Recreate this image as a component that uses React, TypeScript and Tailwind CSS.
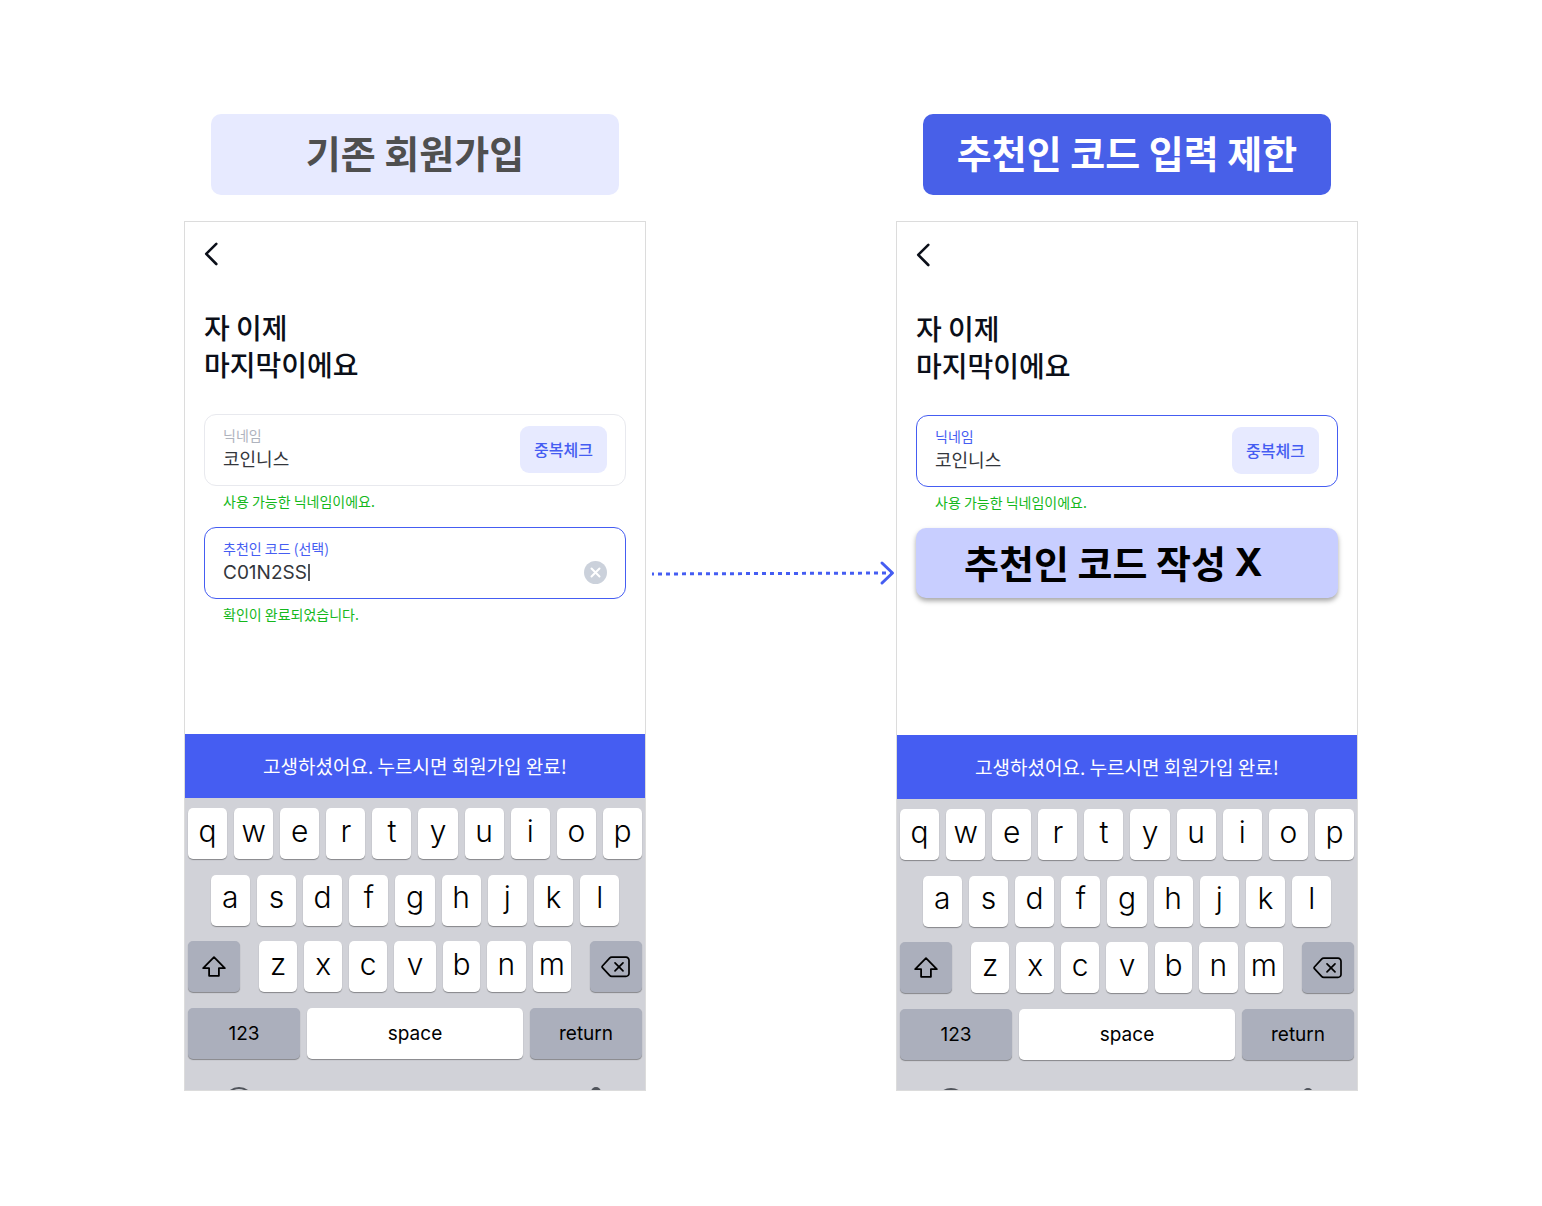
import React, { useId, useState } from 'react';

const KR = "font-['Noto_Sans_CJK_KR',sans-serif]";
const LATIN = "font-['Inter','Noto_Sans_CJK_KR',sans-serif]";

function BackIcon() {
  return (
    <svg width="16" height="24" viewBox="0 0 16 24" fill="none" stroke="#0b0f19" strokeWidth="2.6" strokeLinecap="round" strokeLinejoin="round">
      <path d="M12.300 1.800 2.200 11.800l10.100 10.200" />
    </svg>
  );
}

function ShiftIcon() {
  return (
    <svg width="26" height="22" viewBox="0 0 26 22" fill="none" stroke="#000" strokeWidth="1.8" strokeLinejoin="round">
      <path d="M13 1.200 2.200 12.200h5.900v7.600h9.800v-7.600h5.900z" />
    </svg>
  );
}

function DeleteIcon() {
  return (
    <svg width="30" height="22" viewBox="0 0 30 22" fill="none" stroke="#000" strokeWidth="1.7" strokeLinejoin="round" strokeLinecap="round">
      <path d="M10.800 1.200h14.200a3 3 0 0 1 3 3v13.200a3 3 0 0 1-3 3H10.800a3 3 0 0 1-2.200-1L1.400 11.600a1.200 1.200 0 0 1 0-1.600l7.200-7.800a3 3 0 0 1 2.200-1z" />
      <path d="m14 6.800 8 8m0-8-8 8" />
    </svg>
  );
}

function Key({ children, dark = false, small = false, label }: { children: React.ReactNode; dark?: boolean; small?: boolean; label?: string }) {
  const tone = dark ? 'bg-[#abafbc]' : 'bg-white';
  const size = small ? 'pt-[2px] text-[19px] leading-6 font-normal' : 'pb-[6px] text-[30px] leading-9 font-light';
  return (
    <button
      type="button"
      aria-label={label}
      className={`flex h-[51px] min-w-0 items-center justify-center rounded-[5px] text-black shadow-[0_1px_1px_#85868a] ${LATIN} ${tone} ${label ? '' : size}`}
    >
      {children}
    </button>
  );
}

function Keyboard({ stripClass }: { stripClass: string }) {
  return (
    <div className="bg-[#d1d2d8] px-[3px] pt-[10px]">
      <div className="flex h-[251px] flex-col justify-between">
        <div className="grid grid-cols-10 gap-[7px]">
          {[...'qwertyuiop'].map((k) => <Key key={k}>{k}</Key>)}
        </div>
        <div className="grid grid-cols-9 gap-[7px] px-[5%]">
          {[...'asdfghjkl'].map((k) => <Key key={k}>{k}</Key>)}
        </div>
        <div className="grid grid-cols-[52fr_312fr_52fr] gap-[19px]">
          <Key dark label="shift"><ShiftIcon /></Key>
          <div className="grid grid-cols-[38fr_37fr_38fr_41fr_37fr_38fr_38fr] gap-[7px]">
            {[...'zxcvbnm'].map((k) => <Key key={k}>{k}</Key>)}
          </div>
          <Key dark label="delete"><DeleteIcon /></Key>
        </div>
        <div className="grid grid-cols-[112fr_216fr_112fr] gap-[7px]">
          <Key dark small>123</Key>
          <Key small>space</Key>
          <Key dark small>return</Key>
        </div>
      </div>
      <div className={`flex items-start justify-between overflow-hidden pt-[28px] pr-[39px] pl-[36px] ${stripClass}`}>
        <svg width="30" height="30" viewBox="0 0 30 30" fill="none" stroke="#50545b" strokeWidth="2" className="shrink-0">
          <circle cx="15" cy="15" r="14" />
        </svg>
        <svg width="14" height="30" viewBox="0 0 14 30" fill="#50545b" className="shrink-0">
          <rect x="2" y="0" width="10" height="20" rx="5" />
        </svg>
      </div>
    </div>
  );
}

function Field({ label, initial, active = false, caret = false, latin = false, message, children }: {
  label: string;
  initial: string;
  active?: boolean;
  caret?: boolean;
  latin?: boolean;
  message: string;
  children: React.ReactNode;
}) {
  const id = useId();
  const [value, setValue] = useState(initial);
  return (
    <div>
      <div className={`flex h-[72px] items-center justify-between rounded-xl border px-[18px] ${active ? 'border-[#455df2]' : 'border-[#e8e9ee]'}`}>
        <div className="flex min-w-0 flex-col pb-1">
          <label htmlFor={id} className={`text-[14px] leading-5 ${active ? 'text-[#455df2]' : 'text-[#afb3be]'}`}>{label}</label>
          <div className="flex items-center gap-px">
            <input
              id={id}
              value={value}
              onChange={(e) => setValue(e.target.value)}
              className={`h-[26px] min-w-0 bg-transparent p-0 leading-[22px] text-[#33363b] outline-none [field-sizing:content] ${latin ? `pt-[2px] text-[19px] ${LATIN}` : `text-[18px] ${KR}`}`}
            />
            {caret && <span className="mt-[2px] h-[17px] w-[2px] bg-[#55585d]" />}
          </div>
        </div>
        {children}
      </div>
      <p className="px-[19px] pt-[5px] text-[14px] leading-5 text-[#14b81c]">{message}</p>
    </div>
  );
}

function CheckButton() {
  return (
    <button type="button" className="mb-[2px] h-[47px] shrink-0 rounded-[9px] bg-[#e7eaff] px-[14px] text-[16px] leading-6 font-medium text-[#455df2]">
      중복체크
    </button>
  );
}

function Phone({ children, className, stripClass }: { children: React.ReactNode; className: string; stripClass: string }) {
  return (
    <section className={`border border-[#dcdcdc] bg-white ${className}`}>
      <div className="h-[512px] px-[19px] pt-5">
        <button type="button" aria-label="뒤로" className="block">
          <BackIcon />
        </button>
        <h2 className="mt-[43px] text-[28px] leading-[37px] font-medium text-[#0b0f19]">
          자 이제<br />마지막이에요
        </h2>
        <div className="mt-[31px] flex flex-col gap-4">{children}</div>
      </div>
      <button type="button" className="block h-16 w-full bg-[#455df2] text-[19px] leading-7 text-white">
        고생하셨어요. 누르시면 회원가입 완료!
      </button>
      <Keyboard stripClass={stripClass} />
    </section>
  );
}

function Banner({ children, className }: { children: React.ReactNode; className: string }) {
  return (
    <h1 className={`mx-[27px] mb-[26px] flex h-[81px] items-center justify-center rounded-[10px] pb-[6px] text-[38px] leading-[54px] font-bold whitespace-nowrap ${className}`}>
      {children}
    </h1>
  );
}

export default function App() {
  return (
    <main className={`grid min-h-screen grid-cols-[462fr_250fr_462fr] items-start bg-white px-[184px] pt-[114px] pb-28 ${KR}`}>
      <div>
        <Banner className="bg-[#e7eaff] text-[#4f4f4f]">기존 회원가입</Banner>
        <Phone className="" stripClass="h-[31px]">
          <Field label="닉네임" initial="코인니스" message="사용 가능한 닉네임이에요.">
            <CheckButton />
          </Field>
          <Field label="추천인 코드 (선택)" initial="C01N2SS" message="확인이 완료되었습니다." active caret latin>
            <button type="button" aria-label="지우기" className="mt-[18px] shrink-0">
              <svg width="23" height="23" viewBox="0 0 23 23">
                <circle cx="11.5" cy="11.5" r="11.5" fill="#cbd1db" />
                <path d="m7.5 7.5 8 8m0-8-8 8" stroke="#fff" strokeWidth="2" strokeLinecap="round" />
              </svg>
            </button>
          </Field>
        </Phone>
      </div>

      <svg viewBox="0 0 250 30" fill="none" stroke="#455df2" strokeWidth="3" className="mt-[444px] w-full">
        <path d="M6 16 246 15" strokeDasharray="4 4" strokeDashoffset="2" />
        <path d="m236 5 10.500 10-10.500 10" strokeLinecap="round" strokeLinejoin="round" />
      </svg>

      <div>
        <Banner className="bg-[#4860e8] text-white">추천인 코드 입력 제한</Banner>
        <Phone className="pt-px" stripClass="h-[30px]">
          <Field label="닉네임" initial="코인니스" message="사용 가능한 닉네임이에요." active>
            <CheckButton />
          </Field>
          <p className="flex h-[70px] items-center rounded-[10px] bg-[#c8ceff] pb-[2px] pl-12 text-[38px] leading-[54px] font-bold whitespace-pre text-black shadow-[0_3px_5px_rgba(0,0,0,0.35)]">
            추천인 코드 작성 <span className="font-['Inter',sans-serif]">X</span>
          </p>
        </Phone>
      </div>
    </main>
  );
}
